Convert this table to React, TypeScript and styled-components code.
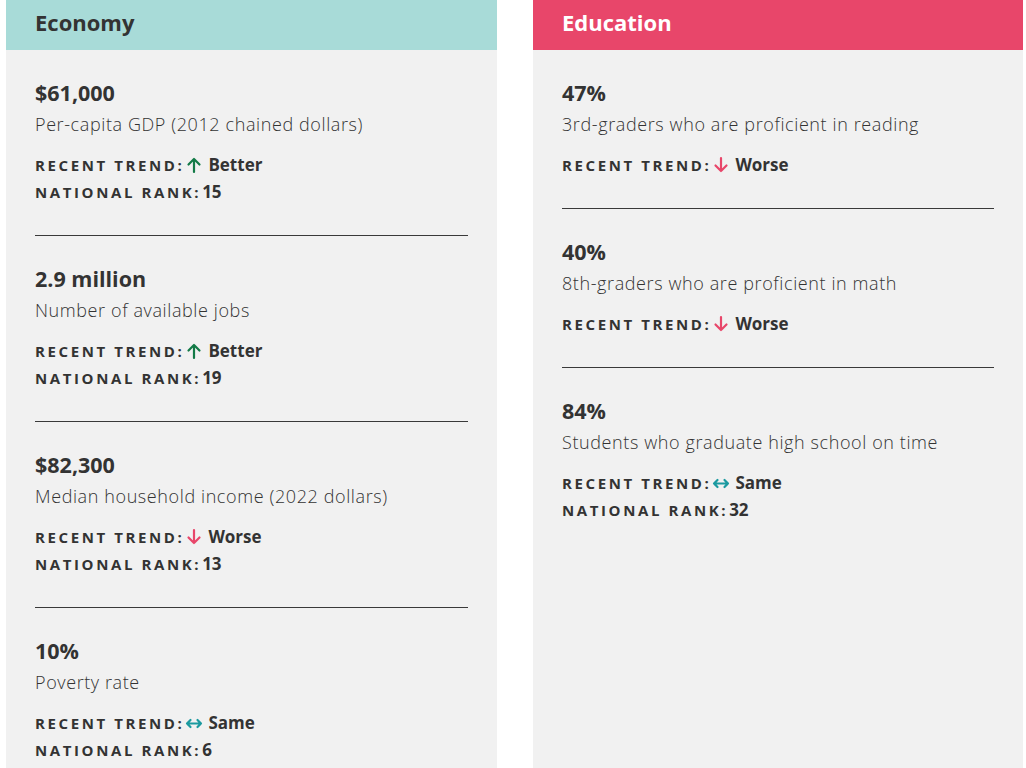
import styled, { createGlobalStyle } from 'styled-components';

const GlobalStyle = createGlobalStyle`
	html, body {
		margin: 0;
		padding: 0;
		background: #ffffff;
	}
	body {
		font-family: 'Open Sans', 'Noto Sans', sans-serif;
		color: #333333;
	}
`;

const Page = styled.div`
	display: grid;
	grid-template-columns: 491px 490px;
	column-gap: 36px;
	padding-left: 6px;
	height: 768px;
	overflow: hidden;
`;

const Panel = styled.section`
	background: #f1f1f1;
	display: flex;
	flex-direction: column;
`;

const Header = styled.h2<{ $bg: string; $fg: string }>`
	margin: 0;
	height: 50px;
	padding: 0 29px 6px;
	box-sizing: border-box;
	display: flex;
	align-items: center;
	background: ${({ $bg }) => $bg};
	color: ${({ $fg }) => $fg};
	font-size: 22px;
	font-weight: 700;
`;

const List = styled.div`
	padding: 10px 29px 0;
	display: flex;
	flex-direction: column;
`;

const Item = styled.div`
	padding: 20px 0 30px;
	border-bottom: 1px solid #3a3a3a;
	&:last-child {
		border-bottom: none;
	}
	& + & {
		padding-top: 30px;
	}
`;

const Value = styled.div`
	font-size: 21.5px;
	font-weight: 700;
	line-height: 26px;
`;

const Desc = styled.div`
	font-size: 18px;
	font-weight: 300;
	letter-spacing: 0.6px;
	line-height: 22px;
	margin-top: 7px;
	margin-bottom: 16px;
`;

const Row = styled.div`
	display: flex;
	align-items: center;
	height: 27px;
`;

const Label = styled.span`
	font-size: 15px;
	font-weight: 700;
	letter-spacing: 2.6px;
	text-transform: uppercase;
	margin-right: 1px;
`;

const Strong = styled.span`
	font-size: 17px;
	font-weight: 700;
`;

const Icon = styled.svg<{ $color: string }>`
	width: 18px;
	height: 18px;
	margin-right: 5px;
	stroke: ${({ $color }) => $color};
	fill: none;
	stroke-width: 2.2;
	stroke-linecap: round;
	stroke-linejoin: round;
`;

type Trend = 'Better' | 'Worse' | 'Same';

const TrendIcon = ({ trend }: { trend: Trend }) => {
	if (trend === 'Better') {
		return (
			<Icon $color="#137a47" viewBox="0 0 18 18">
				<path d="M9 16V3M3.5 8.5L9 3l5.5 5.5" />
			</Icon>
		);
	}
	if (trend === 'Worse') {
		return (
			<Icon $color="#e8466a" viewBox="0 0 18 18">
				<path d="M9 2v13M3.5 9.5L9 15l5.5-5.5" />
			</Icon>
		);
	}
	return (
		<Icon $color="#1b9aa0" viewBox="0 0 18 18">
			<path d="M2 9.5h14M5.5 6L2 9.5 5.5 13M12.5 6l3.5 3.5-3.5 3.5" />
		</Icon>
	);
};

type Stat = { value: string; desc: string; trend: Trend; rank?: number };

const economy: Stat[] = [
	{ value: '$61,000', desc: 'Per-capita GDP (2012 chained dollars)', trend: 'Better', rank: 15 },
	{ value: '2.9 million', desc: 'Number of available jobs', trend: 'Better', rank: 19 },
	{ value: '$82,300', desc: 'Median household income (2022 dollars)', trend: 'Worse', rank: 13 },
	{ value: '10%', desc: 'Poverty rate', trend: 'Same', rank: 6 },
];

const education: Stat[] = [
	{ value: '47%', desc: '3rd-graders who are proficient in reading', trend: 'Worse' },
	{ value: '40%', desc: '8th-graders who are proficient in math', trend: 'Worse' },
	{ value: '84%', desc: 'Students who graduate high school on time', trend: 'Same', rank: 32 },
];

const StatBlock = ({ stat }: { stat: Stat }) => (
	<Item>
		<Value>{stat.value}</Value>
		<Desc>{stat.desc}</Desc>
		<Row>
			<Label>Recent trend:</Label>
			<TrendIcon trend={stat.trend} />
			<Strong>{stat.trend}</Strong>
		</Row>
		{stat.rank !== undefined && (
			<Row>
				<Label>National rank:</Label>
				<Strong>{stat.rank}</Strong>
			</Row>
		)}
	</Item>
);

const App = () => (
	<>
		<GlobalStyle />
		<Page>
			<Panel>
				<Header $bg="#a8dbd8" $fg="#333333">Economy</Header>
				<List>
					{economy.map((s) => (
						<StatBlock key={s.value} stat={s} />
					))}
				</List>
			</Panel>
			<Panel>
				<Header $bg="#e8466a" $fg="#ffffff">Education</Header>
				<List>
					{education.map((s) => (
						<StatBlock key={s.value} stat={s} />
					))}
				</List>
			</Panel>
		</Page>
	</>
);

export default App;
